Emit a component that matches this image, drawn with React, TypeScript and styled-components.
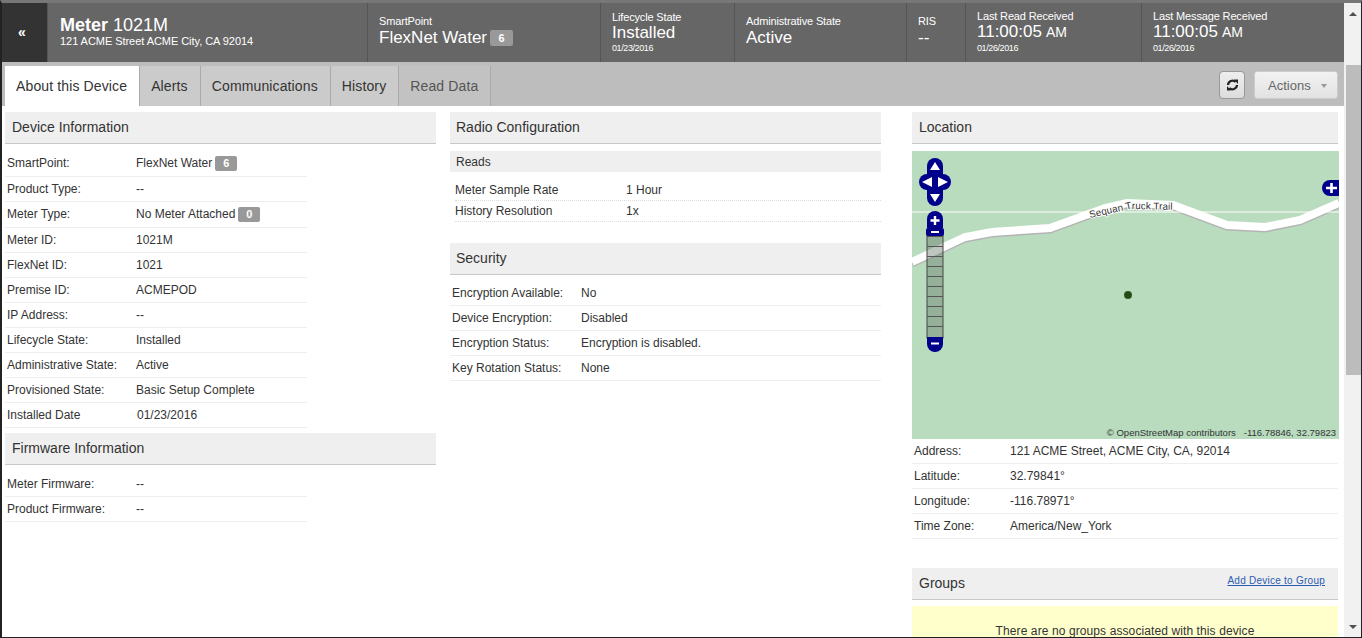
import React from 'react';
import styled, { createGlobalStyle } from 'styled-components';

const GlobalStyle = createGlobalStyle`
  html, body {
    margin: 0;
    padding: 0;
    height: 100%;
    overflow: hidden;
    background: #fff;
  }
  body {
    font-family: "Liberation Sans", Arial, sans-serif;
    font-size: 12px;
    color: #333;
  }
`;

type Field = { label: string; value: string; badge?: string; nudge?: boolean };

const deviceInfo: Field[] = [
  { label: 'SmartPoint:', value: 'FlexNet Water', badge: '6' },
  { label: 'Product Type:', value: '--' },
  { label: 'Meter Type:', value: 'No Meter Attached', badge: '0' },
  { label: 'Meter ID:', value: '1021M' },
  { label: 'FlexNet ID:', value: '1021' },
  { label: 'Premise ID:', value: 'ACMEPOD' },
  { label: 'IP Address:', value: '--' },
  { label: 'Lifecycle State:', value: 'Installed' },
  { label: 'Administrative State:', value: 'Active' },
  { label: 'Provisioned State:', value: 'Basic Setup Complete' },
  { label: 'Installed Date', value: '01/23/2016', nudge: true },
];

const firmware: Field[] = [
  { label: 'Meter Firmware:', value: '--' },
  { label: 'Product Firmware:', value: '--' },
];

const reads: Field[] = [
  { label: 'Meter Sample Rate', value: '1 Hour' },
  { label: 'History Resolution', value: '1x' },
];

const security: Field[] = [
  { label: 'Encryption Available:', value: 'No' },
  { label: 'Device Encryption:', value: 'Disabled' },
  { label: 'Encryption Status:', value: 'Encryption is disabled.' },
  { label: 'Key Rotation Status:', value: 'None' },
];

const location: Field[] = [
  { label: 'Address:', value: '121 ACME Street, ACME City, CA, 92014' },
  { label: 'Latitude:', value: '32.79841°' },
  { label: 'Longitude:', value: '-116.78971°' },
  { label: 'Time Zone:', value: 'America/New_York' },
];

const tabs = ['About this Device', 'Alerts', 'Communications', 'History', 'Read Data'];

const Frame = styled.div`
  width: 1362px;
  height: 638px;
  box-sizing: border-box;
  display: flex;
  overflow: hidden;
  background: #fff;
  border-top: 3px solid #777;
  border-left: 2px solid #222;
  border-right: 1px solid #222;
  border-bottom: 1px solid #222;
`;

const Page = styled.div`
  flex: 1;
  min-width: 0;
  display: flex;
  flex-direction: column;
`;

const Header = styled.header`
  display: flex;
  height: 59px;
  flex-shrink: 0;
  background: #666;
  color: #fff;
`;

const BackButton = styled.div`
  width: 46px;
  display: flex;
  align-items: center;
  justify-content: center;
  background: #333;
  border-right: 1px solid #555;
  font-size: 14px;
  font-weight: bold;
  padding: 0 5px 2px 0;
  box-sizing: border-box;
`;

const TitleCell = styled.div`
  width: 320px;
  box-sizing: border-box;
  padding: 11px 0 0 12px;
  border-right: 1px solid #555;
`;

const Title = styled.div`
  font-size: 18px;
  line-height: 22px;
  b {
    font-weight: bold;
  }
`;

const Address = styled.div`
  font-size: 11px;
  line-height: 12px;
  margin-top: -1px;
  letter-spacing: -0.05px;
`;

const Cell = styled.div<{ $width: number; $top: number }>`
  width: ${(p) => p.$width}px;
  box-sizing: border-box;
  padding: ${(p) => p.$top}px 0 0 11px;
  border-right: 1px solid #555;
  &:last-child {
    border-right: none;
  }
`;

const CellLabel = styled.div<{ $gap?: number }>`
  font-size: 11px;
  line-height: 13px;
  letter-spacing: -0.15px;
  margin-bottom: ${(p) => p.$gap || 0}px;
`;

const CellValue = styled.div`
  font-size: 17px;
  line-height: 17px;
  display: flex;
  align-items: center;
  gap: 3px;
  small {
    font-size: 14px;
    margin-left: 4px;
  }
`;

const CellDate = styled.div`
  font-size: 9px;
  line-height: 10px;
  margin-top: 2px;
  letter-spacing: -0.4px;
`;

const HeaderBadge = styled.span`
  display: inline-block;
  width: 23px;
  height: 16px;
  line-height: 16px;
  border-radius: 2px;
  background: #999;
  color: #fff;
  font-size: 11px;
  font-weight: bold;
  text-align: center;
`;

const TabBar = styled.div`
  height: 44px;
  flex-shrink: 0;
  box-sizing: border-box;
  padding: 4px 6px 0 3px;
  background: #bdbdbd;
  display: flex;
  align-items: flex-start;
`;

const Tab = styled.div<{ $active?: boolean; $muted?: boolean }>`
  height: 40px;
  box-sizing: border-box;
  padding: 0 12px 0 11px;
  line-height: 40px;
  font-size: 14px;
  letter-spacing: 0.13px;
  white-space: nowrap;
  background: ${(p) => (p.$active ? '#fff' : p.$muted ? '#c2c2c2' : '#cbcbcb')};
  color: ${(p) => (p.$muted ? '#555' : '#333')};
  border-right: 1px solid #aaa;
`;

const TabActions = styled.div`
  margin-left: auto;
  display: flex;
  gap: 9px;
  padding-top: 5px;
`;

const RefreshButton = styled.div`
  width: 26px;
  height: 28px;
  box-sizing: border-box;
  display: flex;
  align-items: center;
  justify-content: center;
  border: 1px solid #999;
  border-radius: 4px;
  background: linear-gradient(#eee, #ddd);
`;

const ActionsButton = styled.div`
  width: 84px;
  height: 28px;
  box-sizing: border-box;
  padding: 0 10px 0 13px;
  display: flex;
  align-items: center;
  justify-content: space-between;
  border: 1px solid #ccc;
  border-radius: 3px;
  background: linear-gradient(#f2f2f2, #e2e2e2);
  color: #666;
  font-size: 13px;
`;

const Caret = styled.span`
  width: 0;
  height: 0;
  margin-top: 2px;
  border-left: 3.5px solid transparent;
  border-right: 3.5px solid transparent;
  border-top: 4px solid #999;
`;

const Content = styled.main`
  flex: 1;
  min-height: 0;
  overflow: hidden;
  display: grid;
  grid-template-columns: 431px 431px 443px;
  column-gap: 14px;
  padding: 6px 0 0 3px;
  align-items: start;
`;

const Column = styled.section<{ $shift?: number }>`
  min-width: 0;
  margin-left: ${(p) => p.$shift || 0}px;
`;

const SectionHeader = styled.div<{ $gap?: number; $pad?: number }>`
  height: 32px;
  box-sizing: border-box;
  margin-top: ${(p) => p.$gap || 0}px;
  padding: 0 ${(p) => p.$pad ?? 7}px 2px;
  display: flex;
  align-items: center;
  justify-content: space-between;
  background: #efefef;
  border-bottom: 1px solid #c8c8c8;
  font-size: 14px;
  color: #333;
`;

const SubHeader = styled.div`
  height: 21px;
  line-height: 22px;
  margin-top: 7px;
  padding-left: 6px;
  background: #efefef;
  font-size: 12px;
`;

const Rows = styled.div<{ $width?: number; $top: number }>`
  width: ${(p) => (p.$width ? `${p.$width}px` : 'auto')};
  padding-top: ${(p) => p.$top}px;
`;

const Row = styled.div<{ $height: number; $labelWidth: number; $indent: number; $dotted?: boolean; $badge?: boolean }>`
  height: ${(p) => p.$height + (p.$badge ? 1 : 0)}px;
  box-sizing: border-box;
  display: flex;
  align-items: center;
  ${(p) => (p.$dotted ? `margin-left: ${p.$indent}px;` : `padding-left: ${p.$indent}px;`)}
  padding-bottom: ${(p) => (p.$badge ? 1 : 0)}px;
  border-bottom: ${(p) => (p.$dotted ? '1px dotted #ddd' : '1px solid #eee')};
  font-size: 12px;
  > span:first-child {
    width: ${(p) => p.$labelWidth}px;
    flex-shrink: 0;
  }
`;

const Value = styled.span<{ $nudge?: boolean }>`
  display: flex;
  align-items: center;
  gap: 3px;
  margin-left: ${(p) => (p.$nudge ? 1 : 0)}px;
`;

const Badge = styled.span`
  display: inline-block;
  width: 22px;
  height: 15px;
  line-height: 15px;
  border-radius: 2px;
  background: #999;
  color: #fff;
  font-size: 11px;
  font-weight: bold;
  text-align: center;
`;

const MapBox = styled.div`
  position: relative;
  height: 288px;
  margin: 7px -1px 0 0;
  background: #b9dcbe;
  overflow: hidden;
  svg {
    display: block;
  }
`;

const Attribution = styled.div`
  position: absolute;
  right: 3px;
  bottom: 0;
  font-size: 9.5px;
  line-height: 12px;
  color: #333;
  white-space: pre;
`;

const AddLink = styled.a`
  font-size: 10px;
  letter-spacing: 0.25px;
  color: #2a5db0;
  text-decoration: underline;
  margin: 0 6px 4px 0;
`;

const Notice = styled.div`
  height: 60px;
  margin-top: 6px;
  padding-top: 18px;
  box-sizing: border-box;
  background: #ffc;
  text-align: center;
  font-size: 12px;
  letter-spacing: 0.1px;
`;

const Scrollbar = styled.div`
  width: 17px;
  flex-shrink: 0;
  margin-top: -3px;
  background: #f1f1f1;
  position: relative;
`;

const ScrollThumb = styled.div`
  position: absolute;
  top: 65px;
  left: 2px;
  right: 0;
  height: 310px;
  background: #bcbcbc;
`;

const ScrollArrow = styled.span<{ $down?: boolean }>`
  position: absolute;
  left: 5px;
  ${(p) => (p.$down ? 'bottom: 8px;' : 'top: 12px;')}
  width: 0;
  height: 0;
  border-left: 4px solid transparent;
  border-right: 4px solid transparent;
  ${(p) => (p.$down ? 'border-top: 4px solid #505050;' : 'border-bottom: 4px solid #505050;')}
`;

const FieldRows: React.FC<{
  items: Field[];
  height: number;
  labelWidth: number;
  indent: number;
  width?: number;
  top: number;
  dotted?: boolean;
}> = ({ items, height, labelWidth, indent, width, top, dotted }) => (
  <Rows $width={width} $top={top}>
    {items.map((f) => (
      <Row
        key={f.label}
        $height={height}
        $labelWidth={labelWidth}
        $indent={indent}
        $dotted={dotted}
        $badge={!!f.badge}
      >
        <span>{f.label}</span>
        <Value $nudge={f.nudge}>
          {f.value}
          {f.badge && <Badge>{f.badge}</Badge>}
        </Value>
      </Row>
    ))}
  </Rows>
);

const RefreshIcon: React.FC = () => (
  <svg width="13" height="12" viewBox="0 0 13 12">
    <path d="M2,6 A4.5,4.5 0 0 1 9.6,3" fill="none" stroke="#222" strokeWidth="2.2" />
    <path d="M8,0.5 L12,0.5 L12,5 Z" fill="#222" />
    <path d="M11,6 A4.5,4.5 0 0 1 3.4,9" fill="none" stroke="#222" strokeWidth="2.2" />
    <path d="M5,11.5 L1,11.5 L1,7 Z" fill="#222" />
  </svg>
);

const NAVY = '#00008b';

const MapDrawing: React.FC = () => {
  const road = '0,111 53,86 80,81 138,77 193,57 215,52 261,54 315,74 353,76 388,69 427,52';
  return (
    <svg width="427" height="288" viewBox="0 0 427 288">
      <polyline points={road} fill="none" stroke="#b4b4b4" strokeWidth="8" transform="translate(0 1.5)" />
      <polyline points={road} fill="none" stroke="#fff" strokeWidth="8" />
      <line x1="0" y1="61" x2="427" y2="61" stroke="#fff" strokeWidth="1" />
      <path id="trail" d="M178,67 L218,58 L264,59" fill="none" />
      <text fontFamily="Liberation Sans, Arial, sans-serif" fontSize="10" fill="#333" stroke="#fff" strokeWidth="2" paintOrder="stroke">
        <textPath href="#trail">Sequan Truck Trail</textPath>
      </text>
      <circle cx="216" cy="144" r="4" fill="#2f5a1e" />
      <circle cx="216" cy="144" r="3" fill="#244a16" />

      {/* pan control */}
      <rect x="15" y="7" width="16" height="48" rx="8" fill={NAVY} />
      <rect x="7" y="23" width="32" height="16" rx="8" fill={NAVY} />
      <path d="M23,11 L28,19 L18,19 Z M23,51 L28,43 L18,43 Z M10,31 L20,26 L20,36 Z M36,31 L26,26 L26,36 Z" fill="#fff" />

      {/* zoom bar */}
      <rect x="15" y="84" width="16" height="103" fill="#5f6f60" fillOpacity="0.4" stroke="#444" strokeWidth="1" />
      {Array.from({ length: 10 }, (_, i) => (
        <line key={i} x1="15" x2="31" y1={85.5 + i * 10} y2={85.5 + i * 10} stroke="#555" strokeWidth="1" />
      ))}
      <path d="M15,77 L15,68 A8,8 0 0 1 31,68 L31,77 Z" fill={NAVY} />
      <path d="M18.5,69.5 H27.5 M23,65 V74" stroke="#fff" strokeWidth="2.4" />
      <rect x="14" y="77" width="18" height="8" rx="2" fill={NAVY} />
      <path d="M19,81 H27" stroke="#fff" strokeWidth="2" />
      <path d="M15,186 L31,186 L31,193 A8,8 0 0 1 15,193 Z" fill={NAVY} />
      <path d="M19,192.5 H27" stroke="#fff" strokeWidth="2" />

      {/* layer switcher */}
      <path d="M427,29 L418,29 A8,8 0 0 0 418,45 L427,45 Z" fill={NAVY} />
      <path d="M414,37 H425 M419.5,32 V42" stroke="#fff" strokeWidth="2.6" />
    </svg>
  );
};

const App: React.FC = () => (
  <>
    <GlobalStyle />
    <Frame>
      <Page>
        <Header>
          <BackButton>«</BackButton>
          <TitleCell>
            <Title>
              <b>Meter</b> 1021M
            </Title>
            <Address>121 ACME Street ACME City, CA 92014</Address>
          </TitleCell>
          <Cell $width={233} $top={12}>
            <CellLabel $gap={1}>SmartPoint</CellLabel>
            <CellValue>
              FlexNet Water <HeaderBadge>6</HeaderBadge>
            </CellValue>
          </Cell>
          <Cell $width={134} $top={8}>
            <CellLabel>Lifecycle State</CellLabel>
            <CellValue>Installed</CellValue>
            <CellDate>01/23/2016</CellDate>
          </Cell>
          <Cell $width={172} $top={12}>
            <CellLabel $gap={1}>Administrative State</CellLabel>
            <CellValue>Active</CellValue>
          </Cell>
          <Cell $width={59} $top={12}>
            <CellLabel $gap={1}>RIS</CellLabel>
            <CellValue>--</CellValue>
          </Cell>
          <Cell $width={176} $top={7}>
            <CellLabel>Last Read Received</CellLabel>
            <CellValue>
              <span>
                11:00:05<small>AM</small>
              </span>
            </CellValue>
            <CellDate>01/26/2016</CellDate>
          </Cell>
          <Cell $width={202} $top={7}>
            <CellLabel>Last Message Received</CellLabel>
            <CellValue>
              <span>
                11:00:05<small>AM</small>
              </span>
            </CellValue>
            <CellDate>01/26/2016</CellDate>
          </Cell>
        </Header>

        <TabBar>
          {tabs.map((t, i) => (
            <Tab key={t} $active={i === 0} $muted={t === 'Read Data'}>
              {t}
            </Tab>
          ))}
          <TabActions>
            <RefreshButton>
              <RefreshIcon />
            </RefreshButton>
            <ActionsButton>
              Actions
              <Caret />
            </ActionsButton>
          </TabActions>
        </TabBar>

        <Content>
          <Column>
            <SectionHeader>Device Information</SectionHeader>
            <FieldRows items={deviceInfo} height={25} labelWidth={129} indent={2} width={302} top={7} />
            <SectionHeader $gap={5}>Firmware Information</SectionHeader>
            <FieldRows items={firmware} height={25} labelWidth={129} indent={2} width={302} top={7} />
          </Column>
          <Column>
            <SectionHeader $pad={6}>Radio Configuration</SectionHeader>
            <SubHeader>Reads</SubHeader>
            <FieldRows items={reads} height={21} labelWidth={171} indent={5} top={8} dotted />
            <SectionHeader $gap={21} $pad={6}>Security</SectionHeader>
            <FieldRows items={security} height={25} labelWidth={129} indent={2} top={6} />
          </Column>
          <Column $shift={17}>
            <SectionHeader>Location</SectionHeader>
            <MapBox>
              <MapDrawing />
              <Attribution>© OpenStreetMap contributors   -116.78846, 32.79823</Attribution>
            </MapBox>
            <FieldRows items={location} height={25} labelWidth={96} indent={2} top={0} />
            <SectionHeader $gap={29}>
              Groups
              <AddLink>Add Device to Group</AddLink>
            </SectionHeader>
            <Notice>There are no groups associated with this device</Notice>
          </Column>
        </Content>
      </Page>
      <Scrollbar>
        <ScrollArrow />
        <ScrollThumb />
        <ScrollArrow $down />
      </Scrollbar>
    </Frame>
  </>
);

export default App;
